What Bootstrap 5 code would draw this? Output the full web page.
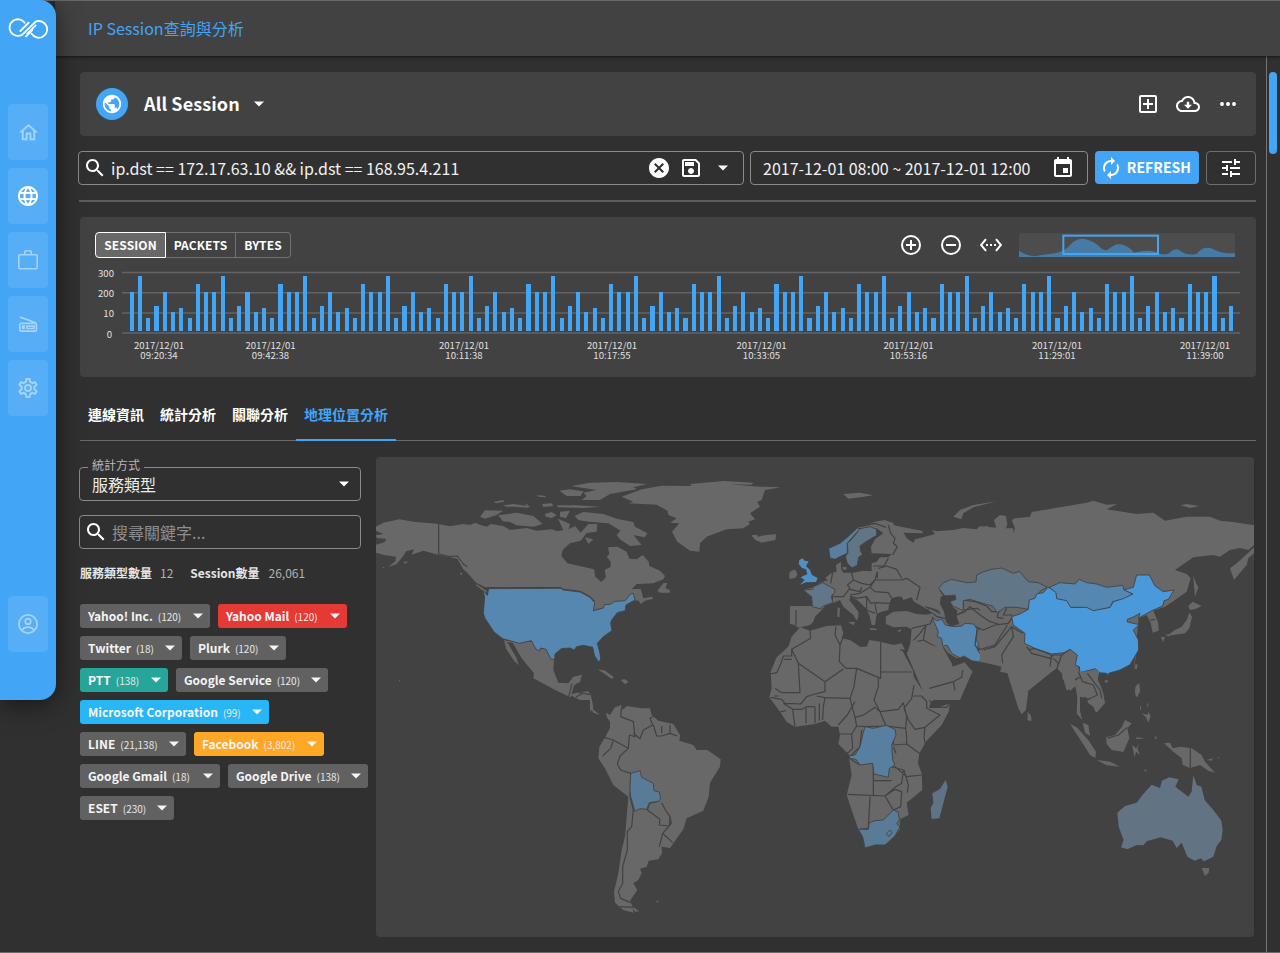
<!DOCTYPE html>
<html lang="zh-Hant">
<head>
<meta charset="utf-8">
<meta name="viewport" content="width=device-width, initial-scale=1">
<title>IP Session查詢與分析</title>
<link rel="stylesheet" href="https://cdn.jsdelivr.net/npm/bootstrap@5.3.0/dist/css/bootstrap.min.css">
<style>
body{background:#303030;color:#fff;font-family:"Noto Sans CJK TC",sans-serif;font-size:16px;line-height:1.5;height:953px;overflow:hidden}
.shell{height:953px;border-top:1px solid #757575;border-bottom:1px solid #6b6b6b}
.rail{width:56px;height:700px;margin-top:-1px;background:#42a5f5;border-radius:0 16px 16px 0;box-shadow:0 4px 26px rgba(0,0,0,.55);z-index:5;padding:17px 8px 0}
.rail a{height:56px;border-radius:4px;background:rgba(255,255,255,.1);color:#a5d3fa;margin-bottom:8px}
.rail a.on{color:#fff}
.rail .menu{padding-top:65px}
.rail .user{margin-top:172px}
.topbar{height:55px;margin-left:-1px;background:#424242;color:#42a5f5;padding:0 0 1px 33px;box-shadow:0 1px 3px rgba(0,0,0,.6);z-index:2}
.work{width:1211px;padding:16px 10px 0 24px;border-right:1px solid #757575;height:897px}
.track{width:13px;padding:16px 0 0 2px}
.thumb{width:8px;height:82px;border-radius:4px;background:#42a5f5}
.panel{background:#424242;border-radius:4px}
.ttl{height:64px;width:1176px;padding:0 16px}
.globe{width:32px;height:32px;background:#42a5f5}
.ttl h1{font-size:18px;font-weight:700;letter-spacing:.1px;margin:0 0 1px;width:95px;white-space:nowrap}
.qbar{margin:15px 0 0 -2px;width:1178px;height:34px}
.boxed{border:1px solid #8a8a8a;border-radius:4px;height:34px}
.q{width:666px;padding:0 8px 0 4px}
.q .txt,.when span{color:#f0f0f0;margin-top:-1px}
.q .txt{margin-left:-4px}
.when{width:338px;margin-left:6px;padding:0 12px}
.refresh{width:104px;height:33px;margin-left:7px;background:#42a5f5;border:0;border-radius:4px;font-weight:700;font-size:14px;letter-spacing:.05px;padding:0 8px 0 6px;color:#fff}
.tune{width:50px;margin-left:7px;border-color:#6e6e6e}
.rule{height:1.5px;background:#5c5c5c;margin:15px 0 15px -1px;width:1177px}
.hist{width:1176px;height:160px;padding:15px 15px 0}
.seg{height:26px;font-size:12px;font-weight:700;letter-spacing:.1px}
.seg span{border:1px solid #717171;border-left-width:0;height:26px;line-height:24px;text-align:center}
.seg .s1{width:71px;background:#686868;border:1px solid #fff;border-radius:4px 0 0 4px}
.seg .s2{width:70px}.seg .s3{width:55px;border-radius:0 4px 4px 0}
.tools{padding-right:6px}
.plot{height:104px;margin-top:-1px}
.axis text{font-size:9.6px;fill:#e0e0e0}
.bars{left:34.7px;bottom:29.5px;width:1104.3px;height:60px}
.bars i{width:4.1px;background:#42a5f5}
.tabs{margin-top:15.5px;width:1176px;height:49px;border-bottom:1px solid #6a6a6a;font-size:14px;font-weight:700}
.tabs span{padding:12px 8px 0;height:49px}
.tabs .on{color:#42a5f5;border-bottom:2.5px solid #42a5f5}
.side{width:296px;padding-top:10px}
.sel{margin-left:-1px;width:282px;padding:0 4px 0 12px}
.sel small{position:absolute;left:8px;top:-12px;font-size:12px;line-height:18px;background:#303030;padding:0 4px;color:#b8b8b8}
.sel span{color:#ececec}
.find{margin:14px 0 0 -1px;width:282px;padding-left:4px;color:#8e8e8e}
.nums{font-size:12px;margin-top:15px;line-height:18px;color:#e6e6e6;height:18px}
.nums span{color:#b0b0b0}
.nums .n1{margin:0 17px 0 8px}
.nums .n2{margin-left:9px}
.chips{gap:8px;width:290px;margin-top:22px}
.chip{height:24px;border-radius:3px;background:#616161;font-size:12px;font-weight:700;padding:0 0 0 8px;white-space:nowrap;color:#f4f4f4}
.chip em{font-style:normal;font-weight:400;font-size:10px;margin-left:5px;color:#e8e8e8}
.chip svg{margin-left:auto;flex-shrink:0}
.red{background:#e53935}.teal{background:#26a69a}.sky{background:#29b6f6}.amber{background:#ffa726}
.map{width:878px;height:480px;overflow:hidden}
.ld{fill:#686868}
.bd{fill:none;stroke:#424242;stroke-width:3.6;stroke-linejoin:round}
.hl{stroke:#424242;stroke-width:2.6;stroke-linejoin:round}
</style>
</head>
<body>
<svg width="0" height="0" class="position-absolute"><defs>
<symbol id="dn" viewBox="0 0 24 24"><path d="M7 9.5l5 5 5-5z" fill="currentColor"/></symbol>
<symbol id="find" viewBox="0 0 24 24"><path fill="currentColor" d="M15.5 14h-.79l-.28-.27C15.41 12.59 16 11.11 16 9.5 16 5.91 13.09 3 9.5 3S3 5.91 3 9.5 5.91 16 9.5 16c1.61 0 3.09-.59 4.23-1.57l.27.28v.79l5 4.99L20.49 19l-4.99-5zm-6 0C7.01 14 5 11.99 5 9.5S7.01 5 9.5 5 14 7.01 14 9.5 11.99 14 9.5 14z"/></symbol>
</defs></svg>
<div class="shell d-flex">
<nav class="rail position-relative flex-shrink-0">
<svg width="40" height="22" viewBox="0 0 120 66" class="d-block"><g fill="none" stroke="#fff" stroke-width="5.5" stroke-linecap="round" stroke-linejoin="round"><path d="M37 42L62 17M83 25L58 50M50 17A25 25 0 1 0 43 53L83 14A25 25 0 1 1 71 50M54 58L72 40"/></g></svg>
<div class="menu d-grid">
<a class="d-flex align-items-center justify-content-center"><svg width="23" height="23" viewBox="0 0 24 24" fill="currentColor"><path d="M12 5.69L17 10.19V18H15V12H9V18H7V10.19L12 5.69M12 3L2 12H5V20H11V14H13V20H19V12H22L12 3Z"/></svg></a>
<a class="on d-flex align-items-center justify-content-center"><svg width="24" height="24" viewBox="0 0 24 24" fill="currentColor"><path d="M11.99 2C6.47 2 2 6.48 2 12s4.47 10 9.99 10C17.52 22 22 17.52 22 12S17.52 2 11.99 2zm6.93 6h-2.95c-.32-1.25-.78-2.45-1.38-3.56 1.84.63 3.37 1.91 4.33 3.56zM12 4.04c.83 1.2 1.48 2.53 1.91 3.96h-3.82c.43-1.43 1.08-2.76 1.91-3.96zM4.26 14C4.1 13.36 4 12.69 4 12s.1-1.36.26-2h3.38c-.08.66-.14 1.32-.14 2 0 .68.06 1.34.14 2H4.26zm.82 2h2.95c.32 1.25.78 2.45 1.38 3.56-1.84-.63-3.37-1.9-4.33-3.56zm2.95-8H5.08c.96-1.66 2.49-2.93 4.33-3.56C8.81 5.55 8.35 6.75 8.03 8zM12 19.96c-.83-1.2-1.48-2.53-1.91-3.96h3.82c-.43 1.43-1.08 2.76-1.91 3.96zM14.34 14H9.66c-.09-.66-.16-1.32-.16-2 0-.68.07-1.35.16-2h4.68c.09.65.16 1.32.16 2 0 .68-.07 1.34-.16 2zm.25 5.56c.6-1.11 1.06-2.31 1.38-3.56h2.95c-.96 1.65-2.49 2.93-4.33 3.56zM16.36 14c.08-.66.14-1.32.14-2 0-.68-.06-1.34-.14-2h3.38c.16.64.26 1.31.26 2s-.1 1.36-.26 2h-3.38z"/></svg></a>
<a class="d-flex align-items-center justify-content-center"><svg width="24" height="24" viewBox="0 0 24 24" fill="none" stroke="currentColor" stroke-width="1.6"><rect x="2.8" y="6.8" width="18.4" height="14" rx="1"/><path d="M8.8 6.5V3.6q0-.8.8-.8h4.8q.8 0 .8.8v2.9"/></svg></a>
<a class="d-flex align-items-center justify-content-center"><svg width="24" height="24" viewBox="0 0 24 24" fill="none" stroke="currentColor" stroke-width="1.7"><path d="M4 5L19.2 10.6q1.2.5 1.2 2v5.4q0 1.2-1.2 1.2H5q-1.2 0-1.2-1.2v-5.4q0-1.2 1.2-1.2h14.5"/><path d="M6.6 14.2h1.6v2.3H6.600zM11 14.2h7v2.3h-7z"/></svg></a>
<a class="d-flex align-items-center justify-content-center"><svg width="24" height="24" viewBox="0 0 24 24" fill="currentColor"><path d="M12,8A4,4 0 0,1 16,12A4,4 0 0,1 12,16A4,4 0 0,1 8,12A4,4 0 0,1 12,8M12,10A2,2 0 0,0 10,12A2,2 0 0,0 12,14A2,2 0 0,0 14,12A2,2 0 0,0 12,10M10,22C9.75,22 9.54,21.82 9.5,21.58L9.13,18.93C8.5,18.68 7.96,18.34 7.44,17.94L4.95,18.95C4.73,19.03 4.46,18.95 4.34,18.73L2.34,15.27C2.21,15.05 2.27,14.78 2.46,14.63L4.57,12.97L4.5,12L4.57,11L2.46,9.37C2.27,9.22 2.21,8.95 2.34,8.73L4.34,5.27C4.46,5.05 4.73,4.96 4.95,5.05L7.44,6.05C7.96,5.66 8.5,5.32 9.13,5.07L9.5,2.42C9.54,2.18 9.75,2 10,2H14C14.25,2 14.46,2.18 14.5,2.42L14.87,5.07C15.5,5.32 16.04,5.66 16.56,6.05L19.05,5.05C19.27,4.96 19.54,5.05 19.66,5.27L21.66,8.73C21.79,8.95 21.73,9.22 21.54,9.37L19.43,11L19.5,12L19.43,13L21.54,14.63C21.73,14.78 21.79,15.05 21.66,15.27L19.66,18.73C19.54,18.95 19.27,19.04 19.05,18.95L16.56,17.95C16.04,18.34 15.5,18.68 14.87,18.93L14.5,21.58C14.46,21.82 14.25,22 14,22H10M11.25,4L10.88,6.61C9.68,6.86 8.62,7.5 7.85,8.39L5.44,7.35L4.69,8.65L6.8,10.2C6.4,11.37 6.4,12.64 6.8,13.8L4.68,15.36L5.43,16.66L7.86,15.62C8.63,16.5 9.68,17.14 10.87,17.38L11.24,20H12.76L13.13,17.39C14.32,17.14 15.37,16.5 16.14,15.62L18.57,16.66L19.32,15.36L17.2,13.81C17.6,12.64 17.6,11.37 17.2,10.2L19.31,8.65L18.56,7.35L16.15,8.39C15.38,7.5 14.32,6.86 13.12,6.62L12.75,4H11.25Z"/></svg></a>
<a class="user d-flex align-items-center justify-content-center"><svg width="24" height="24" viewBox="0 0 24 24" fill="none" stroke="currentColor" stroke-width="1.8"><circle cx="12" cy="12" r="9.1"/><circle cx="12" cy="9.4" r="2.7"/><path d="M5.6 18.2Q8 15.2 12 15.2T18.4 18.2"/></svg></a>
</div>
</nav>
<div class="flex-grow-1">
<header class="topbar position-relative d-flex align-items-center">IP Session查詢與分析</header>
<div class="d-flex">
<main class="work">
<section class="panel ttl d-flex align-items-center">
<span class="globe rounded-circle d-flex align-items-center justify-content-center me-3"><svg width="22" height="22" viewBox="0 0 24 24" fill="#fff"><path d="M12 2C6.48 2 2 6.48 2 12s4.48 10 10 10 10-4.48 10-10S17.52 2 12 2zm-1 17.93c-3.95-.49-7-3.85-7-7.93 0-.62.08-1.21.21-1.79L9 15v1c0 1.1.9 2 2 2v1.93zm6.9-2.54c-.26-.81-1-1.39-1.9-1.39h-1v-3c0-.55-.45-1-1-1H8v-2h2c.55 0 1-.45 1-1V7h2c1.1 0 2-.9 2-2v-.41c2.93 1.19 5 4.06 5 7.41 0 2.08-.8 3.97-2.1 5.39z"/></svg></span>
<h1>All Session</h1>
<svg width="24" height="24" class="ms-2"><use href="#dn"/></svg>
<span class="ms-auto d-flex gap-3">
<svg width="24" height="24" viewBox="0 0 24 24" fill="#fff"><path d="M5 3h14a2 2 0 0 1 2 2v14a2 2 0 0 1-2 2H5a2 2 0 0 1-2-2V5a2 2 0 0 1 2-2zm0 2v14h14V5zm6 2h2v4h4v2h-4v4h-2v-4H7v-2h4z"/></svg>
<svg width="24" height="24" viewBox="0 0 24 24" fill="#fff"><path d="M19.35 10.04C18.67 6.59 15.64 4 12 4 9.11 4 6.6 5.64 5.35 8.04 2.34 8.36 0 10.91 0 14c0 3.31 2.69 6 6 6h13c2.76 0 5-2.24 5-5 0-2.64-2.05-4.78-4.65-4.96zM19 18H6c-2.21 0-4-1.79-4-4s1.79-4 4-4h.71C7.37 7.69 9.48 6 12 6c3.04 0 5.5 2.46 5.5 5.5v.5H19c1.66 0 3 1.34 3 3s-1.34 3-3 3z"/><path d="M13.2 9.8v3h2.8l-4 4-4-4h2.8v-3z"/></svg>
<svg width="24" height="24" viewBox="0 0 24 24" fill="#fff"><circle cx="6" cy="12" r="2"/><circle cx="12" cy="12" r="2"/><circle cx="18" cy="12" r="2"/></svg>
</span>
</section>
<section class="qbar d-flex">
<div class="boxed q d-flex align-items-center gap-2"><svg width="24" height="24" class="flex-shrink-0"><use href="#find"/></svg><span class="txt me-auto">ip.dst == 172.17.63.10 &amp;&amp; ip.dst == 168.95.4.211</span>
<svg width="24" height="24" viewBox="0 0 24 24" fill="#fff"><path d="M12 2C6.47 2 2 6.47 2 12s4.47 10 10 10 10-4.47 10-10S17.53 2 12 2zm5 13.59L15.59 17 12 13.41 8.41 17 7 15.59 10.59 12 7 8.41 8.41 7 12 10.59 15.59 7 17 8.41 13.41 12 17 15.59z"/></svg>
<svg width="24" height="24" viewBox="0 0 24 24" fill="#fff"><path d="M17 3H5c-1.11 0-2 .9-2 2v14c0 1.1.89 2 2 2h14c1.1 0 2-.9 2-2V7l-4-4zm2 16H5V5h11.17L19 7.83V19zm-7-7c-1.66 0-3 1.34-3 3s1.34 3 3 3 3-1.34 3-3-1.34-3-3-3zM6 6h9v4H6z"/></svg>
<svg width="24" height="24"><use href="#dn"/></svg></div>
<div class="boxed when d-flex align-items-center justify-content-between"><span>2017-12-01 08:00 ~ 2017-12-01 12:00</span><svg width="24" height="24" viewBox="0 0 24 24" fill="#fff"><path d="M17 12h-5v5h5v-5zM16 1v2H8V1H6v2H5c-1.11 0-1.99.9-1.99 2L3 19c0 1.1.89 2 2 2h14c1.1 0 2-.9 2-2V5c0-1.1-.9-2-2-2h-1V1h-2zm3 18H5V8h14v11z"/></svg></div>
<button class="refresh d-flex align-items-center justify-content-between"><svg width="20" height="24" viewBox="2 0 20 24" fill="#fff"><path d="M12 6v3l4-4-4-4v3c-4.42 0-8 3.58-8 8 0 1.57.46 3.03 1.24 4.26L6.7 14.8c-.45-.83-.7-1.79-.7-2.8 0-3.31 2.69-6 6-6zm6.76 1.74L17.3 9.2c.44.84.7 1.79.7 2.8 0 3.31-2.69 6-6 6v-3l-4 4 4 4v-3c4.42 0 8-3.58 8-8 0-1.57-.46-3.03-1.24-4.26z"/></svg>REFRESH</button>
<div class="boxed tune d-flex align-items-center justify-content-center"><svg width="24" height="24" viewBox="0 0 24 24" fill="#fff"><path d="M3 17v2h6v-2H3zM3 5v2h10V5H3zm10 16v-2h8v-2h-8v-2h-2v6h2zM7 9v2H3v2h4v2h2V9H7zm14 4v-2H11v2h10zm-6-4h2V7h4V5h-4V3h-2v6z"/></svg></div>
</section>
<div class="rule"></div>
<section class="panel hist">
<div class="d-flex align-items-center">
<div class="seg d-flex"><span class="s1">SESSION</span><span class="s2">PACKETS</span><span class="s3">BYTES</span></div>
<div class="tools ms-auto d-flex align-items-center gap-3">
<svg width="24" height="24" viewBox="0 0 24 24" fill="none" stroke="#fff" stroke-width="2"><circle cx="12" cy="12" r="9"/><path d="M7 12h10M12 7v10"/></svg>
<svg width="24" height="24" viewBox="0 0 24 24" fill="none" stroke="#fff" stroke-width="2"><circle cx="12" cy="12" r="9"/><path d="M7 12h10"/></svg>
<svg width="24" height="24" viewBox="0 0 24 24" fill="#fff"><path d="M7.77 6.76L6.23 5.48.82 12l5.41 6.52 1.54-1.28L3.42 12l4.35-5.24zM7 13h2v-2H7v2zm10-2h-2v2h2v-2zm-6 2h2v-2h-2v2zm6.77-7.52l-1.54 1.28L20.58 12l-4.35 5.24 1.54 1.28L23.18 12l-5.41-6.52z"/></svg>
<svg width="216" height="24" viewBox="57 517 648 72"><rect x="57" y="517" width="648" height="72" rx="10" fill="#4d4d4d"/><path d="M57 570Q75 584 105 587Q130 582 165 578Q195 574 215 548Q235 530 258 536Q285 544 300 560Q315 576 330 562Q350 545 370 553Q390 560 402 576Q440 565 470 574Q480 584 505 579Q530 555 545 574Q570 586 590 579Q615 550 645 568Q665 579 705 578V589H57Z" fill="#467ba6"/><rect x="190" y="525" width="284" height="55" fill="none" stroke="#42a5f5" stroke-width="6"/></svg>
</div></div>
<div class="plot position-relative">
<svg class="axis d-block" width="1150" height="104" viewBox="95 258 1150 104"><path d="M122 273.5H1240M122 293.8H1240M122 314H1240M122 334H1240" stroke="#636363" stroke-width="1.4"/>
<g text-anchor="end"><text x="114" y="277.5">300</text><text x="114" y="297.5">200</text><text x="114" y="318">10</text><text x="112" y="338.500">0</text></g>
<g text-anchor="middle" id="ticks"></g></svg>
<div class="bars position-absolute d-flex justify-content-between align-items-end" id="bars"></div>
</div>
</section>
<div class="tabs d-flex"><span>連線資訊</span><span>統計分析</span><span>關聯分析</span><span class="on">地理位置分析</span></div>
<div class="d-flex pt-3">
<section class="side flex-shrink-0">
<div class="boxed sel position-relative d-flex align-items-center justify-content-between"><small>統計方式</small><span>服務類型</span><svg width="24" height="24"><use href="#dn"/></svg></div>
<div class="boxed find d-flex align-items-center"><svg width="24" height="24" class="text-white me-1"><use href="#find"/></svg>搜尋關鍵字...</div>
<div class="nums d-flex"><b>服務類型數量</b><span class="n1">12</span><b>Session數量</b><span class="n2">26,061</span></div>
<div class="chips d-flex flex-wrap" id="chips"></div>
</section>
<section class="panel map flex-shrink-0">
<svg class="d-block" width="878" height="480" viewBox="376 457 878 480">
<!-- North America -->
<g transform="translate(370 450) scale(.33333)">
<path class="ld" d="M18 230L40 218 88 208 130 215 200 221 240 229 280 222 300 225 316 218 330 224 350 230 362 222 400 228 420 240 470 234 500 242 545 238 562 244 580 240 564 206 600 222 596 238 615 228 632 248 655 222 682 222 680 245 650 249 632 272 600 280 578 300 574 318 592 340 672 358 676 380 694 396 708 382 704 360 722 350 722 335 710 320 718 312 714 292 742 290 770 305 778 326 800 328 818 315 836 335 838 348 870 362 885 378 880 388 850 400 800 402 785 418 812 416 820 445 846 440 850 446 825 452 812 462 806 452 790 450 670 481 630 440 350 413 318 398 298 375 280 358 262 326 205 314 160 302 125 314 132 298 108 304 100 318 80 342 54 352 76 334 78 320 45 316 18 308 18 284 45 276 48 266 20 264 18 256 40 252 18 242Z"/>
<path class="ld" d="M330 200L345 181 400 182 378 196 345 206ZM385 196L440 188 490 198 518 222 490 230 440 226 420 216 398 214ZM370 156L400 150 402 155 378 160ZM400 166L430 162 470 168 465 158 480 170 470 173 435 170 410 170ZM500 136L525 137 528 142 505 140ZM516 162L545 160 550 168 520 171ZM524 192L545 186 560 196 545 204 528 200ZM570 185L600 182 588 205 570 200ZM560 166L620 166 690 170 640 174 565 172ZM568 122L600 118 640 124 632 138 590 138ZM605 108L660 98 740 96 832 102 790 112 800 118 720 132 690 150 635 150 650 138 640 128 680 120 625 112ZM614 198L640 186 700 192 740 206 790 216 795 230 832 250 824 262 790 255 815 285 780 288 750 268 740 255 752 242 715 220 655 215 625 210ZM645 262L670 268 655 282ZM318 402L350 422 348 430 318 406ZM270 366L278 372 272 376ZM862 422L880 400 892 398 886 415 900 420V428L870 428ZM100 336L115 334 105 342ZM38 350L44 352 40 356Z"/>
<path class="ld" d="M402 570L450 578 485 574 502 598 528 595 552 630 550 660 565 698 595 700 610 680 636 674 630 696 612 706 602 742 560 722 490 685 492 670 455 625 428 578 412 576 440 625 446 646 432 632 408 596ZM620 728L655 724 664 740 662 750H630L600 735ZM684 660L705 662 732 682 724 686 700 668ZM752 690L762 688 774 696 765 702ZM88 688L91 694H87Z"/>
<path class="bd" d="M206 222V312L240 320 262 318 280 342 292 350M350 413H572L580 418 630 424 660 440 674 455M402 568L450 576 485 572M596 740L606 700M620 700L628 728 660 734M618 742L640 728"/>
<path class="hl" fill="#5587b0" d="M338 420L352 436 356 416 572 415 580 420 630 426 660 442 674 458 670 482 700 474 704 464 720 463 735 454 765 452 782 432 790 430 795 450 768 465 766 482 742 488 725 510 722 520 726 542 700 560 682 580 690 610 692 628 686 636 674 618 668 592 640 586 620 590 612 600 600 594 574 596 555 612 554 630 542 626 528 598 512 594 510 602 498 598 484 572 448 580 398 566 372 546 345 505 340 490 344 440Z"/>
</g>
<!-- Greenland, Iceland, South America -->
<g transform="translate(590 450) scale(.33333)">
<path class="ld" d="M95 140L155 118 215 107 305 108 300 102 400 93 490 98 485 104 420 103 510 110 572 112 525 120 515 150 502 156 510 170 480 190 495 208 475 215 480 222 460 235 410 238 350 260 330 280 328 305 300 302 262 275 246 245 268 220 240 218 260 205 235 195 232 182 200 164 115 160 130 155ZM484 256L500 254 505 260 535 254 558 256 556 270 515 278 496 270ZM598 370L612 360 622 372 618 382 600 386Z"/>
<path class="ld" d="M25 658L45 662 70 682 62 684ZM95 692L105 688 115 696 105 702ZM0 730L6 750 10 775 0 785ZM0 770L30 795 10 788ZM48 788L60 795 75 772 95 765 98 780 110 768 155 775 180 775 185 795 205 812 250 822 270 855 268 872 310 885 320 900 352 900 392 928 390 950 360 998 356 1040 340 1082 290 1105 280 1138 250 1180 240 1194 215 1190 216 1210 205 1228 176 1232 170 1250 150 1256 155 1270 145 1290 130 1300 142 1320 120 1352 128 1370 130 1388 100 1380 75 1358 72 1325 85 1270 95 1200 105 1160 115 1040 70 1005 45 955 25 925 28 890 45 862 60 835 60 815 50 800ZM198 1354L208 1352 202 1358ZM125 1368L148 1384 135 1385Z"/>
<path class="bd" d="M95 768L92 800 130 815 135 860 118 855 115 895 70 870 42 862M70 870L62 895 38 918M115 895L90 918 82 942 92 960 122 970 120 1040M130 850L150 866 160 840 188 825 180 805 198 795M190 825L200 858 215 858 240 850 262 858M215 828V850M240 824L240 850M120 1040L130 1080 125 1130 112 1145 112 1200 98 1250 98 1300 85 1325 92 1345 122 1358M172 1080L178 1060 208 1052M172 1080L210 1108 208 1125 238 1128 240 1100 225 1078 215 1058M240 1100L244 1120 218 1150 208 1190M218 1150L248 1178M90 1370L130 1372"/>
<path class="hl" fill="#5a7b98" d="M122 970L150 962 155 982 190 1000 192 1022 208 1026 212 1046 205 1054 178 1058 170 1078 150 1076 135 1084 122 1040 120 1020Z"/>
</g>
<!-- Europe and western Asia -->
<g transform="translate(760 500) scale(.33333)">
<path class="ld" d="M90 318L160 318 155 290 130 270 160 262 180 248 205 240 195 235 210 222 218 218 230 215 228 195 243 186 243 208 250 218 280 218 310 212 335 214 335 190 350 185 360 172 385 172 396 162 335 160 333 140 345 118 370 100 350 85 290 85 320 75 345 65 375 60 400 66 402 76 430 82 485 92 490 100 430 98 442 116 460 128 465 118 490 112 525 102 516 90 530 94 580 90 610 84 650 88 660 78 720 85 760 85V490L720 490 700 485 660 487 610 470 590 475 565 460 550 440 545 455 575 490 578 500 610 488 615 500 637 515 600 600H500L440 460 450 440 455 388 440 380 400 382 378 372 377 350 400 335 440 333 470 342 498 344 520 340 480 315 462 305 455 292 430 300 425 290 410 290 395 295 388 310 385 330 365 335 350 342 345 375 335 375 328 345 318 325 290 300 272 290 268 300 295 335 295 350 290 362 280 345 250 320 240 300 220 308 195 318 180 335 165 350 160 365 150 375 115 383 105 375 90 372Z"/>
<path class="ld" d="M90 215L105 208 112 222 105 234 88 236ZM248 200L260 202 258 210 248 208ZM233 322L240 325 238 352 232 350ZM265 366L285 366 280 376ZM0 108L48 102 45 115 10 126 0 124ZM580 50L600 30 640 15 710 4 640 22 610 40 604 58ZM330 384L350 386V390H332ZM410 392L425 388 420 396ZM250 -18L300 -22 340 -14 300 -8 265 -4Z"/>
<path class="bd" d="M160 318L185 325M108 330V375M222 265L215 308M218 218L212 250M275 218L280 240 262 255 270 265 250 290 222 290M280 240L305 250 330 255 345 240 352 215M305 262L300 275 270 268M270 285L300 280 330 262 345 275 385 278 395 295M330 262L345 240 425 240 440 235 480 262 470 300M352 215L352 235M355 205L380 198 410 208 425 235M340 198L372 198 385 175M385 75L392 100 405 115 400 130 412 140 398 165M378 60L402 68M300 80L345 70 378 82M270 288L290 295 320 290 332 310 345 308 388 310M320 292L320 330 345 340M288 300L308 318M350 340L345 312M495 320L530 330 540 340M520 340L530 350 555 355M455 385L510 372 520 352M452 430L480 400 495 380M498 376L490 420 545 450M445 440L470 425 490 420M610 300V330L650 325 690 345 720 370M590 345L610 335M650 385L680 390 720 370M655 445L690 440 720 400M540 270L560 300"/>
<path fill="#424242" d="M542 290L556 284 575 288 590 286 584 300 572 305 578 320 592 332 590 350 598 372 570 380 558 365 552 335 540 312Z"/>
<path fill="#4f90c6" d="M118 180L128 175 134 182 146 184 138 198 150 210 156 225 173 234 168 246 138 247 120 254 134 240 122 232 142 222 138 208 126 204 116 192Z"/>
<path class="hl" fill="#587fa0" d="M206 145L240 130 262 112 292 84 300 86 272 118 262 130 262 160 240 170 225 178 210 174Z"/>
<path class="hl" fill="#607687" d="M300 86L330 80 350 88 350 106 318 125 300 138 302 155 308 162 296 172 292 195 276 204 262 190 256 170 264 158 262 130 275 118Z"/>
<path class="hl" fill="#617688" d="M130 270L158 268 160 260 188 248 225 268 224 278 214 288 218 308 190 318 180 326 157 320 155 290Z"/>
<path class="hl" fill="#5587b0" d="M516 352L530 362 545 358 556 375 580 380 605 378 615 370 640 372 652 385 648 420 655 430 652 450 666 468 658 486 635 482 612 468 600 474 575 460 562 436 548 438 545 415 532 410 535 395Z"/>
</g>
<!-- Africa, Arabia, Madagascar -->
<g transform="translate(760 620) scale(.33333)">
<path class="ld" d="M115 28L122 22 150 32 200 18 243 16 250 40 245 55 270 60 300 80 320 80 328 60 360 65 400 75 425 70 436 92 425 88 442 120 458 150 462 172 480 200 500 228 512 250 508 260 530 264 570 250 566 275 545 315 500 362 478 400 474 430 485 460 487 510 440 548 446 585 420 598 419 630 405 645 375 675 345 675 315 684 308 650 295 628 275 570 260 525 275 465 268 420 268 405 235 372 240 345 235 320 215 320 195 302 165 312 105 320 80 306 60 275 28 232 35 205 32 155 50 112 85 80 95 50ZM444 92L455 60 550 85 575 130 578 142 605 145 612 125 638 155 618 185 580 212 512 245 505 205 475 160Z"/>
<path class="bd" d="M150 30L152 55 95 88 95 108 70 108 62 132 50 158 32 162M95 118H72M95 88L115 130 195 185 250 147M115 130L120 218H65L45 205M228 20L225 45 240 75 238 125 258 145M240 75L250 50M362 65V175L290 145 258 145M362 156H455M290 145L282 200 270 235 195 233 170 228M195 185V215L165 222 140 230 122 252M355 175V200L342 240 360 275 345 262 310 285 285 292 270 235M195 233L190 260 188 300M285 245L262 285 235 315M285 292L290 318 315 320 378 318M360 275L415 268 430 248M360 275L378 318M430 248L440 290 437 325 378 318M462 195L455 235 432 265 445 300 465 328 495 322 540 285 500 265 500 245 485 228 460 228M495 322L492 350 495 370M437 325L440 350 440 372 478 400M402 375L440 372M400 340V375M405 440L440 470 485 465M268 415L300 435M262 523L375 528M340 430V525M340 482L395 482M395 440L430 450 425 490 405 502 375 528M432 450L445 495 442 518M375 528L405 508 425 515 422 560 400 570 375 528M330 530L325 625 300 628M240 342L275 342 290 318M275 342L278 385 260 402M305 330L300 380 275 405M32 232L65 238 75 250 125 252M42 228H56M70 250L98 268 100 285 105 320M60 276L78 272M138 262V310M165 260V310M178 250V302M98 268H125L140 260 165 260M508 205L580 185 605 172 608 150M580 185L585 212M508 262L560 262 570 250M400 380L408 400M438 60V105M420 90L445 92"/>
<path class="hl" fill="#587fa0" d="M315 320L340 325 378 316 405 328 408 345 395 375 398 420 405 435 388 445 385 472 342 462 338 430 300 435 288 418 268 415 270 407 285 405 300 380 308 345Z"/>
<path class="hl" fill="#5a7b98" d="M295 628L325 628 328 608 345 602 370 600 400 570 414 575 418 598 410 612 420 620 405 648 375 675 345 675 315 684 308 650Z"/>
<path class="hl" fill="none" d="M379 640L390 630 396 638 386 650Z"/>
<path fill="#5f7385" d="M557 480L563 500 538 595 515 597 512 565 520 548 517 520 540 507Z"/>
</g>
<!-- Asia -->
<g transform="translate(920 500) scale(.33333)">
<path class="ld" d="M200 78L225 90 228 80 222 60 240 45 258 48 262 75 250 102 280 98 285 85 275 60 285 55 330 50 335 36 420 22 500 8 520 2 560 14 592 12 560 28 650 42 700 38 735 62 800 50 870 50 900 62 940 66 1002 76V135L985 150 960 144 930 150 900 170 880 165 820 172 765 210 800 222 812 235 800 275 765 300 735 320 700 332 715 370 716 392 698 398 692 370 680 345 656 355 640 520 650 450 630 495 600 510 565 520 538 518 530 530 545 565 555 608 528 638 520 620 505 610 500 595 480 590 480 630 486 660 470 640 472 590 465 555 440 572 425 520 410 505 390 520 325 572 318 630 305 643 295 625 262 520 240 515 245 500 225 495 180 485V85Z"/>
<path class="ld" d="M1002 160L985 175 980 195 942 240 930 205 950 190 985 158 1002 142ZM782 16L800 12 838 18 810 24ZM820 225L828 250 835 262 825 290 822 255ZM805 318L818 305 845 318 825 328 810 330ZM808 338L816 350 808 385 795 400 740 408 765 390 785 380 800 360ZM722 412L735 410 730 426ZM736 404L750 402 748 410ZM645 498L652 492 650 508 645 506ZM552 542L565 540 560 550ZM646 560L656 552 660 570 652 592 646 585ZM325 640L335 655 330 660H322Z"/>
<path class="bd" d="M110 345L135 335 150 320 180 345 210 365 235 372M130 300L165 305 200 318 215 335 240 335M165 380L190 390 225 375 265 370 278 350M235 335L232 352 250 355M260 325L250 345 278 345M172 385L165 435 175 450 225 435 262 375M190 450L225 440 250 410 275 380 300 395 310 400M275 380L280 410 245 465 248 490M320 440L335 460 390 475 400 465 425 465 450 448M325 450L345 445 395 465M395 465L390 500M400 475L415 490 410 510M425 465L415 495M470 480L480 515 495 515 530 545 545 585 540 610M495 515L465 540 472 560M480 540L500 555 522 560 528 590 500 600M500 515L515 545M690 332L705 325 730 310M690 360L705 358M0 340L30 325 60 340"/>
<path class="hl" fill="#617687" d="M56 265L70 248 95 238 140 248 168 246 170 225 190 215 215 208 245 204 280 220 298 214 325 245 355 248 382 262 362 272 345 295 325 320 325 328 290 322 255 322 232 338 218 318 195 312 150 298 130 302V332L98 318 90 305 108 298 105 285 75 288Z"/>
<path class="hl" fill="#4a99da" d="M275 350L300 342 325 328 328 300 345 295 350 282 370 278 384 262 410 275 412 295 440 300 455 322 500 320 520 330 570 322 580 305 638 282 610 270 640 262 650 225 688 225 705 258 730 275 762 270 745 298 732 302 728 318 700 330 655 354 660 340 638 352 622 358 622 366 658 374 640 390 655 420 656 450 630 494 600 510 566 520 564 528 560 520 538 518 526 506 480 518 478 500 466 495 472 465 450 448 432 458 395 462 345 445 313 430 315 400 280 375Z"/>
<path class="hl" fill="#5488b3" d="M388 262L420 248 465 252 478 238 500 248 530 252 560 262 608 256 612 270 638 282 610 296 578 305 570 322 520 332 500 322 452 322 440 302 410 296 408 278Z"/>
</g>
<!-- South-East Asia and Oceania -->
<g transform="translate(1010 640) scale(.33333)">
<path class="ld" d="M52 215L62 225 65 242 55 242ZM155 110L180 152 200 135 195 110ZM198 130L205 180 215 160 240 178 255 200 262 216 284 190 280 160 262 125 268 92 205 95ZM200 170L205 210 216 238 205 225ZM180 252L200 262 235 300 258 335 256 355 240 345 215 305ZM218 248L235 255 240 288 225 278ZM288 292L315 285 335 262 345 240 365 250 352 265 358 295 340 336 305 330 290 312ZM260 360L300 365 330 380 290 376ZM366 315L378 325 388 310 382 325 390 345 378 335 374 352ZM378 292L405 295 380 298ZM380 135L388 130 390 155 380 170 375 155ZM395 220L412 225 415 215 422 228 415 248 408 232ZM410 185L416 198 412 200ZM390 195L394 205 390 212ZM376 72L383 75 378 88ZM434 288L441 292 437 300ZM462 310L480 308 488 325 510 320 545 325 575 345 585 365 615 398 595 392 570 375 540 384 518 375 515 355 490 335ZM590 360L608 355 605 362ZM624 350L628 352 624 356ZM403 388L410 390 406 396ZM575 684L598 684 596 698 585 708Z"/>
<path class="bd" d="M541 325V384M292 295L325 285 352 262M205 95L218 125 250 135 262 165 235 178 222 172M232 100L270 150 275 175M195 120L212 110"/>
<path fill="#627483" d="M550 406L560 435 574 440 584 480 610 510 634 542 638 570 634 600 620 618 610 650 582 664 572 655 555 662 532 650 520 620 515 608 500 624 488 602 452 592 410 604 400 616 380 615 352 628 333 622 341 600 326 560 322 518 345 498 380 488 400 462 425 434 450 444 456 422 478 412 506 418 496 440 535 470 545 455Z"/>
</g>
</svg>
</section>
</div>
</main>
<div class="track"><div class="thumb"></div></div>
</div>
</div>
</div>
<script>
// session histogram
var pattern=[39,55,13,25.5,39,19.5,23.5,13,47.5,39],html='';
for(var i=0;i<134;i++)html+='<i style="height:'+pattern[i%10]+'px"></i>';
document.getElementById('bars').innerHTML=html;
document.getElementById('ticks').innerHTML=[[159,'09:20:34'],[270.5,'09:42:38'],[464,'10:11:38'],[612,'10:17:55'],[761.5,'10:33:05'],[908.5,'10:53:16'],[1057,'11:29:01'],[1205,'11:39:00']].map(function(t){
return '<text x="'+t[0]+'" y="349.5">2017/12/01</text><text x="'+t[0]+'" y="359.5">'+t[1]+'</text>'}).join('');
// service chips: name, count, width, colour
document.getElementById('chips').innerHTML=[['Yahoo! Inc.','120',130,''],['Yahoo Mail','120',129,'red'],['Twitter','18',102,''],['Plurk','120',96,''],['PTT','138',88,'teal'],['Google Service','120',152,''],['Microsoft Corporation','99',189,'sky'],['LINE','21,138',106,''],['Facebook','3,802',130,'amber'],['Google Gmail','18',140,''],['Google Drive','138',140,''],['ESET','230',94,'']].map(function(c){
return '<span class="chip d-flex align-items-center '+c[3]+'" style="width:'+c[2]+'px">'+c[0]+'<em>('+c[1]+')</em><svg width="24" height="24"><use href="#dn"/></svg></span>'}).join('');
</script>
<script src="https://cdn.jsdelivr.net/npm/bootstrap@5.3.0/dist/js/bootstrap.bundle.min.js"></script>
</body>
</html>
